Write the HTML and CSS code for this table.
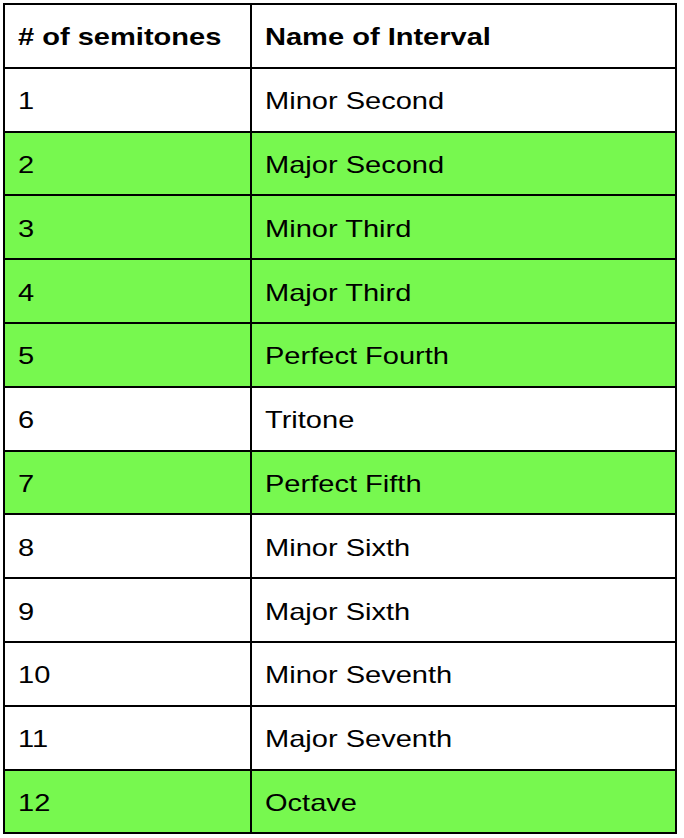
FILE: index.html
```html
<!DOCTYPE html>
<html>
<head>
<meta charset="utf-8">
<link rel="stylesheet" href="styles.css">
</head>
<body>
<table class="intervals">
  <thead>
    <tr><th class="c1"><span>#&nbsp;of semitones</span></th><th><span>Name of Interval</span></th></tr>
  </thead>
  <tbody>
    <tr><td class="c1"><span>1</span></td><td><span>Minor Second</span></td></tr>
    <tr class="hl"><td class="c1"><span>2</span></td><td><span>Major Second</span></td></tr>
    <tr class="hl"><td class="c1"><span>3</span></td><td><span>Minor Third</span></td></tr>
    <tr class="hl"><td class="c1"><span>4</span></td><td><span>Major Third</span></td></tr>
    <tr class="hl"><td class="c1"><span>5</span></td><td><span>Perfect Fourth</span></td></tr>
    <tr><td class="c1"><span>6</span></td><td><span>Tritone</span></td></tr>
    <tr class="hl"><td class="c1"><span>7</span></td><td><span>Perfect Fifth</span></td></tr>
    <tr><td class="c1"><span>8</span></td><td><span>Minor Sixth</span></td></tr>
    <tr><td class="c1"><span>9</span></td><td><span>Major Sixth</span></td></tr>
    <tr><td class="c1"><span>10</span></td><td><span>Minor Seventh</span></td></tr>
    <tr><td class="c1"><span>11</span></td><td><span>Major Seventh</span></td></tr>
    <tr class="hl"><td class="c1"><span>12</span></td><td><span>Octave</span></td></tr>
  </tbody>
</table>
</body>
</html>
```
FILE: styles.css
```css
html, body {
  margin: 0;
  padding: 0;
  background: #ffffff;
}
body {
  padding: 3px 0 0 3px;
  font-family: "Liberation Sans", Arial, sans-serif;
  color: #000000;
}
.intervals {
  border-collapse: collapse;
  width: 674px;
  table-layout: fixed;
}
.intervals th,
.intervals td {
  border: 2px solid #000000;
  height: 58.8px;
  padding: 3px 0 0 13px;
  text-align: left;
  vertical-align: middle;
  font-size: 24px;
  line-height: 28px;
  white-space: nowrap;
  overflow: hidden;
}
.intervals th {
  font-weight: bold;
}
.intervals .c1 {
  width: 232px;
}
.intervals span {
  display: inline-block;
  transform: scaleX(1.21);
  transform-origin: left center;
}
.intervals tr.hl td {
  background: #77f84f;
}
```
